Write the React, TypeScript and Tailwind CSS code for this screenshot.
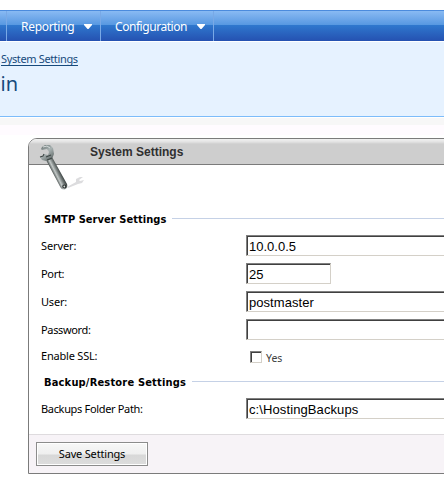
import type { ReactNode } from 'react';

const ui = "font-['DejaVu_Sans_Condensed','DejaVu_Sans',sans-serif]";
const tahoma = "font-['Noto_Sans','Open_Sans',sans-serif]";

function NavItem({ label, width, text }: { label: string; width: string; text: string }) {
  return (
    <div className={`flex h-full shrink-0 items-center border-r border-[#79a9e6] pl-[14px] ${width}`}>
      <span className={`whitespace-nowrap pt-[2px] text-[12px] leading-[16px] text-white ${text}`}>{label}</span>
      <svg className="ml-[10px] mt-px shrink-0" width="8" height="5" viewBox="0 0 8 5" fill="#fff">
        <path d="M0 0h8v1L4.5 5h-1L0 1z" />
      </svg>
    </div>
  );
}

function Heading({ children, text }: { children: ReactNode; text: string }) {
  return (
    <div className="flex h-[25px] items-center pl-[15px]">
      <h2 className={`shrink-0 whitespace-nowrap pt-[2px] text-[11px] font-bold leading-[14px] text-black ${text}`}>{children}</h2>
      <div className="ml-[6px] h-px grow bg-[#c5d1e6]" />
    </div>
  );
}

function Row({ label, text, height, children }: { label: string; text: string; height: string; children: ReactNode }) {
  return (
    <div className={`flex items-start pl-[12px] pt-[4px] ${height}`}>
      <div className="flex h-[21px] w-[205px] shrink-0 items-center">
        <span className={`whitespace-nowrap text-[11px] leading-[14px] text-black ${text}`}>{label}</span>
      </div>
      {children}
    </div>
  );
}

function Field({ value, width, text }: { value: string; width: string; text: string }) {
  return (
    <div className={`h-[21px] shrink-0 border border-b-[#d4d0c8] border-l-[#808080] border-r-[#d4d0c8] border-t-[#808080] bg-white ${width}`}>
      <div className="flex h-full items-center border-l border-t border-[#404040] pl-px">
        <span className={`whitespace-nowrap font-['Liberation_Sans',sans-serif] text-[13px] leading-[15px] text-black ${text}`}>{value}</span>
      </div>
    </div>
  );
}

function Wrench() {
  return (
    <svg className="absolute left-[9px] top-[5px]" width="50" height="50" viewBox="0 0 50 50">
      <defs>
        <linearGradient id="shaft" x1="15" y1="29" x2="22" y2="25.5" gradientUnits="userSpaceOnUse">
          <stop offset="0" stopColor="#59605f" />
          <stop offset=".3" stopColor="#c3c9c8" />
          <stop offset=".6" stopColor="#7c8382" />
          <stop offset="1" stopColor="#2f3635" />
        </linearGradient>
        <linearGradient id="jaw" x1="2" y1="2" x2="15" y2="17" gradientUnits="userSpaceOnUse">
          <stop offset="0" stopColor="#66706f" />
          <stop offset=".45" stopColor="#a9b3b3" />
          <stop offset="1" stopColor="#535b5a" />
        </linearGradient>
      </defs>
      <path d="M29 43l9-5 0-3 4-2 3 0-4 3 1 1 4-1-2 3-4 1-10 4z" fill="#dcdcde" />
      <path d="M8 16l6-3 15 27c1 3-1 5.500-3 5.500-2 0-3-1-4-3z" fill="url(#shaft)" />
      <path d="M4 3l3-2 5 0 3 3 1 6-2 5-6 2-4-1-2-3 3-1 1-2 4 1 1-3-2-3-5 1-1-1z" fill="url(#jaw)" />
      <path d="M2 13l3-1 1-2M8 13l5-2M9 16l5-2" fill="none" stroke="#3e4645" strokeWidth="1.1" />
      <path d="M5 3l4-1 3 2" fill="none" stroke="#d5dcdc" strokeWidth="1" />
      <circle cx="26.300" cy="42.500" r="1.500" fill="#d8dddb" stroke="#2c3231" strokeWidth="1.200" />
    </svg>
  );
}

export default function App() {
  return (
    <div className={`h-[490px] w-[444px] overflow-hidden bg-white ${tahoma}`}>
      <div className="h-[10px]" />
      <nav className="flex h-[31px] border-t border-[#4b8bdd] bg-[linear-gradient(to_bottom,#89baf3_0,#5798e1_14px,#2f78ce_14px,#2551b1_30px)]">
        <div className="h-full w-[7px] shrink-0 border-r border-[#79a9e6]" />
        <NavItem label="Reporting" width="w-[94px]" text="w-[53px] tracking-[-0.3px]" />
        <NavItem label="Configuration" width="w-[113px]" text="w-[72px] tracking-[-0.45px]" />
      </nav>
      <div className="h-px bg-white" />
      <header className="h-[75px] border-b border-[#7dbcfa] bg-[#e6f2ff] text-[#174a7c]">
        <div className="pt-[10px]">
          <a className="ml-px block h-[14px] w-[77px] whitespace-nowrap border-b border-[#174a7c] text-[11px] leading-[13px] tracking-[-0.36px]">System Settings</a>
        </div>
        <div className="mt-[6px] flex w-[18px] justify-end overflow-hidden">
          <h1 className="whitespace-nowrap text-[20px] leading-[24px]">Admin</h1>
        </div>
      </header>
      <div className="h-px bg-white" />
      <div className="h-[7px] bg-[#f7f7f7]" />
      <div className="h-[10px] bg-[#fffbff]" />
      <div className="h-[3px]" />

      <section className="relative ml-[28px] h-[336px] w-[440px] rounded-tl-[9px] border border-[#7b7b7b] bg-white">
        <div className="flex h-[26px] items-center rounded-tl-[8px] border-b border-[#7b7b7b] bg-[linear-gradient(to_bottom,#f2f2f2_0,#e2e2e2_3px,#cecece_5px,#cecece_100%)] pl-[61px]">
          <span className="whitespace-nowrap pt-px font-['Liberation_Sans',sans-serif] text-[12px] font-bold leading-[14px] text-[#303030]">System Settings</span>
        </div>
        <Wrench />
        <div className="h-[41px]" />
        <Heading text={`${ui} w-[122px] tracking-[0.05px]`}>SMTP Server Settings</Heading>
        <Row label="Server:" text="tracking-[-0.1px]" height="h-[28px]">
          <Field value="10.0.0.5" width="w-[240px]" text="" />
        </Row>
        <Row label="Port:" text="tracking-[-0.3px]" height="h-[28px]">
          <Field value="25" width="w-[85px]" text="" />
        </Row>
        <Row label="User:" text="tracking-[-0.2px]" height="h-[28px]">
          <Field value="postmaster" width="w-[240px]" text="tracking-[0.05px]" />
        </Row>
        <Row label="Password:" text="tracking-[-0.35px]" height="h-[28px]">
          <Field value="" width="w-[240px]" text="" />
        </Row>
        <Row label="Enable SSL:" text="-mt-[3px] tracking-[-0.2px]" height="h-[26px]">
          <div className="flex items-center pl-[4px] pt-[3px]">
            <div className="size-[12px] border border-b-[#d4d0c8] border-l-[#808080] border-r-[#d4d0c8] border-t-[#808080] bg-white">
              <div className="size-full border-l border-t border-[#404040]" />
            </div>
            <span className="ml-[4px] pt-[2px] text-[10.5px] leading-[12px] text-[#404040]">Yes</span>
          </div>
        </Row>
        <Heading text={`${ui} w-[142px] tracking-[0.18px]`}>Backup/Restore Settings</Heading>
        <Row label="Backups Folder Path:" text="tracking-[-0.33px]" height="h-[40px]">
          <Field value="c:\HostingBackups" width="w-[240px]" text="tracking-[0.1px]" />
        </Row>
        <footer className="h-[39px] border-t border-[#dedbde] bg-[#f7f3f7] pl-[7px] pt-[7px]">
          <button className="flex h-[24px] w-[112px] items-center justify-center border border-[#8c8c8c] bg-white p-px">
            <span className="flex h-full w-full items-center justify-center bg-[linear-gradient(to_bottom,#f7f7f7_0,#efefef_50%,#d8d8d8_55%,#dcdcdc_100%)] text-[11px] leading-[14px] tracking-[-0.18px] text-black">
              Save Settings
            </span>
          </button>
        </footer>
      </section>
    </div>
  );
}
